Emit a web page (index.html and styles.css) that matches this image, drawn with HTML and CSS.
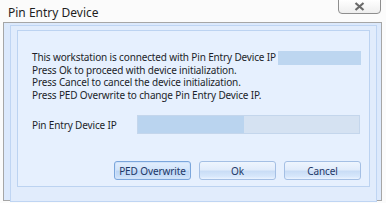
FILE: index.html
```html
<!DOCTYPE html>
<html lang="en">
<head>
  <meta charset="UTF-8">
  <title>Pin Entry Device</title>
  <link rel="stylesheet" href="styles.css">
</head>
<body>
<div class="window">
  <div class="titlebar">
    <span class="title">Pin Entry Device</span>
    <button class="close" aria-label="Close">
      <svg width="11" height="9" viewBox="0 0 11 9"><path d="M1.5 1 L9.5 8 M9.5 1 L1.5 8" stroke="#6a6a6a" stroke-width="2.2" fill="none"/></svg>
    </button>
  </div>

  <div class="frame">
    <div class="group">
      <div class="panel">
        <div class="message">
          <div class="line">This workstation is connected with Pin Entry Device IP <span class="ip-field"></span></div>
          <div class="line">Press Ok to proceed with device initialization.</div>
          <div class="line">Press Cancel to cancel the device initialization.</div>
          <div class="line">Press PED Overwrite to change Pin Entry Device IP.</div>
        </div>

        <div class="ip-row">
          <label for="ip">Pin Entry Device IP</label>
          <div class="ip-input" id="ip"><div class="ip-fill"></div></div>
        </div>

        <div class="buttons">
          <button class="btn focused">PED Overwrite</button>
          <button class="btn">Ok</button>
          <button class="btn">Cancel</button>
        </div>
      </div>
    </div>
  </div>
</div>
</body>
</html>
```

FILE: styles.css
```css
body {
  margin: 0;
  background: #f4f4f4;
  font-family: "Noto Sans", "Open Sans", sans-serif;
  font-size: 10px;
  letter-spacing: -0.15px;
}
.window {
  width: 386px;
  height: 203px;
  background: #fbfbfb;
}
.titlebar {
  height: 22px;
  display: flex;
  justify-content: space-between;
  align-items: flex-start;
}
.title {
  margin: 4px 0 0 8px;
  font-size: 12px;
  letter-spacing: 0;
  color: #1e1e1e;
}
.close {
  width: 43px;
  height: 15px;
  margin-right: 5px;
  margin-top: -1px;
  padding: 0;
  border: 1px solid #8e8e8e;
  border-radius: 0 0 4px 4px;
  background: linear-gradient(#ffffff, #eeeeee);
  display: flex;
  align-items: center;
  justify-content: center;
}
.frame {
  margin: 0 4px 0 3px;
  height: 173px;
  border: 1px solid #a6a6a6;
  background: #dce9fc;
  padding: 2px 4px 2px 6px;
}
.group {
  height: 167px;
  border: 1px solid #bfd5f3;
  background: #e1ecfc;
  padding: 4px 6px 4px 6px;
}
.panel {
  height: 157px;
  border: 1px solid #bcd3f1;
  background: #e6f0fe;
  padding: 20px 8px 0 14px;
  box-sizing: border-box;
  color: #1c1f2a;
}
.message .line {
  height: 12.6px;
  line-height: 12.6px;
  white-space: nowrap;
}
.ip-field {
  display: inline-block;
  width: 83px;
  height: 14px;
  vertical-align: -4px;
  margin-left: 0;
  background: #bdd6f0;
}
.ip-row {
  display: flex;
  align-items: center;
  margin-top: 14px;
}
.ip-row label {
  width: 105px;
}
.ip-input {
  width: 221px;
  height: 17px;
  border: 1px solid #c4d6ec;
  background: #d5e2f2;
}
.ip-fill {
  width: 106px;
  height: 100%;
  background: #bad4ef;
}
.buttons {
  display: flex;
  justify-content: flex-end;
  gap: 8px;
  margin-top: 27px;
}
.btn {
  width: 77px;
  height: 19px;
  padding: 0;
  font-family: inherit;
  font-size: 10px;
  letter-spacing: -0.1px;
  color: #1d3766;
  border: 1px solid #a4bfe4;
  border-radius: 3px;
  background: linear-gradient(#eef5fe 0%, #e1ecfb 45%, #c9ddf6 55%, #d7e7fb 85%, #ecf4ff 100%);
}
.btn.focused {
  border-color: #7ba6dc;
  box-shadow: inset 0 0 0 1px #cfe2f9;
  background: linear-gradient(#e2eefd 0%, #d3e5fb 45%, #bcd6f6 55%, #c9def8 85%, #dfedfd 100%);
}
```
